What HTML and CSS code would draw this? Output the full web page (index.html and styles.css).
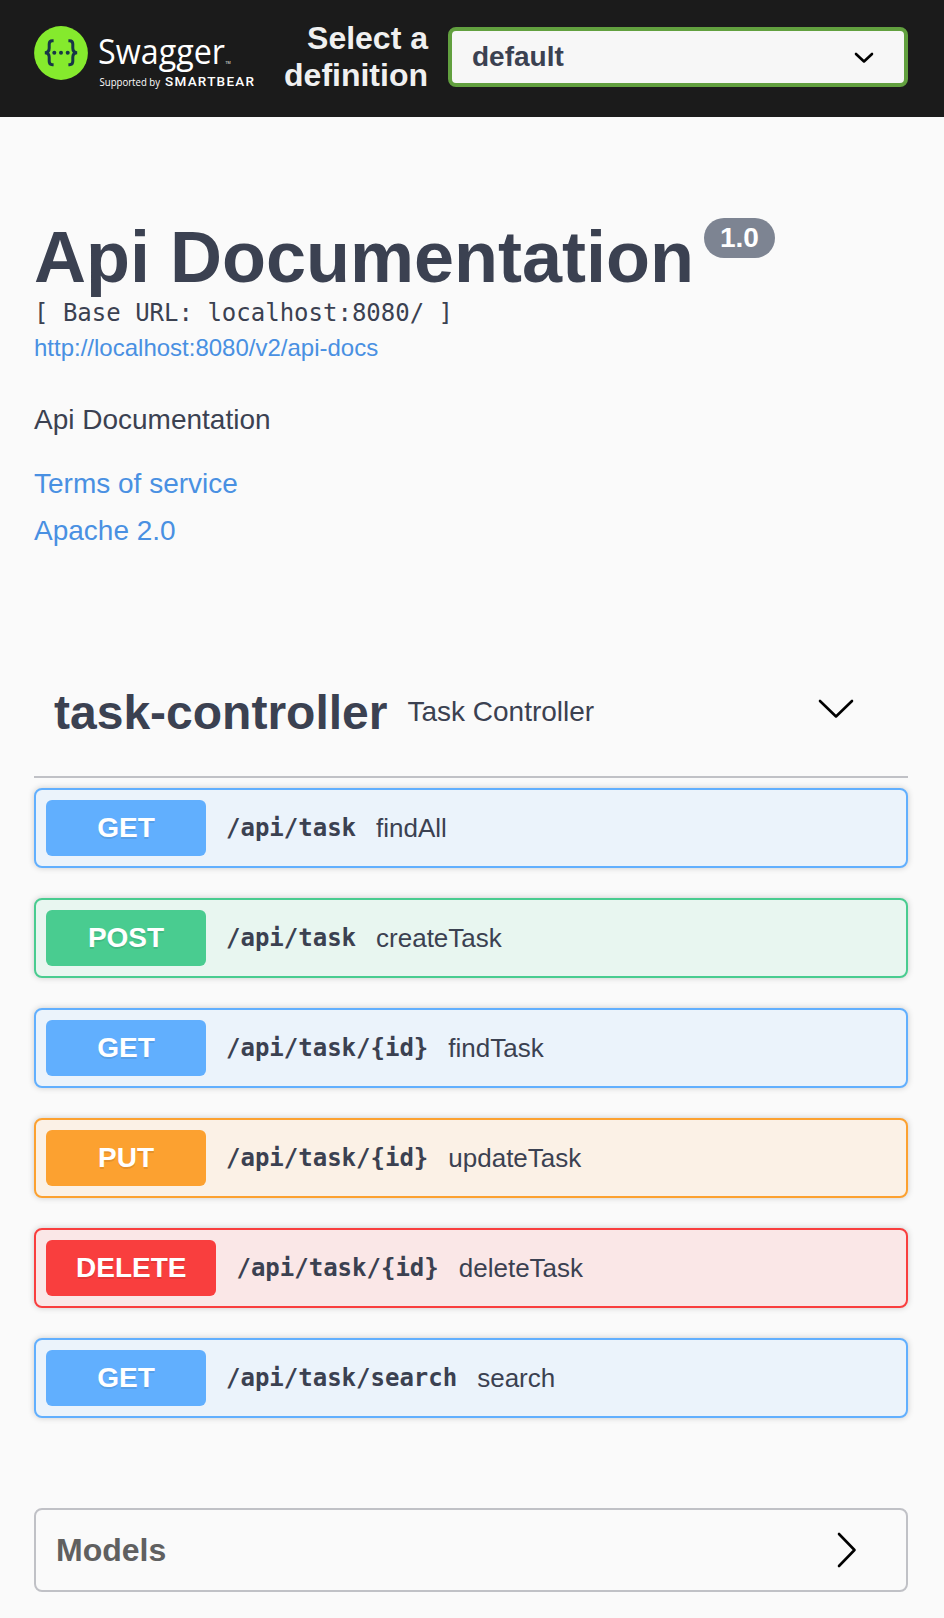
FILE: index.html
```html
<!DOCTYPE html>
<html lang="en">
<head>
<meta charset="utf-8">
<title>Swagger UI</title>
<link rel="stylesheet" href="styles.css">
</head>
<body>
<header class="topbar">
  <svg class="logo" width="222" height="70" viewBox="0 0 222 70" role="img" aria-label="Swagger">
    <circle cx="27" cy="27" r="26.9" fill="#85ea2d"/>
    <g fill="none" stroke="#173647" stroke-width="3">
      <path d="M19.600 14.700h-1.200q-3.200 0-3.200 3.400v4q0 4.600-4.400 4.600q4.400 0 4.400 4.600v4q0 3.400 3.200 3.400h1.200"/>
      <path d="M34.400 14.700h1.200q3.200 0 3.200 3.400v4q0 4.600 4.400 4.600q-4.400 0-4.400 4.600v4q0 3.400-3.200 3.400h-1.200"/>
    </g>
    <g fill="#173647"><circle cx="20.300" cy="26.700" r="2"/><circle cx="27" cy="26.700" r="2"/><circle cx="33.700" cy="26.700" r="2"/></g>
    <text class="logo-name" x="64" y="37.500" textLength="127" lengthAdjust="spacingAndGlyphs">Swagger</text>
    <text class="logo-tm" x="191.500" y="37.500">TM</text>
    <text class="logo-by" x="65.500" y="59.500" textLength="60.500" lengthAdjust="spacingAndGlyphs">Supported by</text>
    <text class="logo-owner" x="131" y="59.500" textLength="89">SMARTBEAR</text>
  </svg>
  <label class="select-label" for="definition">Select a<br>definition</label>
  <button class="select" id="definition" type="button">default
    <svg width="20" height="12" viewBox="0 0 20 12"><path d="M2 2l8 7.500l8-7.500" fill="none" stroke="#000" stroke-width="2.600" stroke-linecap="round" stroke-linejoin="round"/></svg>
  </button>
</header>
<main class="page">
  <section class="info">
    <div class="title-row"><h1 class="title">Api Documentation</h1><span class="version">1.0</span></div>
    <div class="base-url">[ Base URL: localhost:8080/ ]</div>
    <a class="docs-link">http://localhost:8080/v2/api-docs</a>
    <p class="description">Api Documentation</p>
    <a class="terms">Terms of service</a>
    <a class="license">Apache 2.0</a>
  </section>
  <section>
    <div class="tag">
      <h2 class="tag-name">task-controller</h2>
      <span class="tag-text">Task Controller</span>
      <svg class="tag-arrow" width="36" height="20" viewBox="0 0 36 20"><path d="M2 2l16 15.500l16-15.500" fill="none" stroke="#000" stroke-width="2.600" stroke-linecap="round" stroke-linejoin="round"/></svg>
    </div>
    <div class="operations">
      <div class="op get"><span class="method">GET</span><span class="path">/api/task</span><span class="summary">findAll</span></div>
      <div class="op post"><span class="method">POST</span><span class="path">/api/task</span><span class="summary">createTask</span></div>
      <div class="op get"><span class="method">GET</span><span class="path">/api/task/{id}</span><span class="summary">findTask</span></div>
      <div class="op put"><span class="method">PUT</span><span class="path">/api/task/{id}</span><span class="summary">updateTask</span></div>
      <div class="op delete"><span class="method">DELETE</span><span class="path">/api/task/{id}</span><span class="summary">deleteTask</span></div>
      <div class="op get"><span class="method">GET</span><span class="path">/api/task/search</span><span class="summary">search</span></div>
    </div>
  </section>
  <section class="models">
    <h3 class="models-title">Models</h3>
    <svg width="20" height="36" viewBox="0 0 20 36"><path d="M2 2l15.500 16l-15.500 16" fill="none" stroke="#000" stroke-width="2.600" stroke-linecap="round" stroke-linejoin="round"/></svg>
  </section>
</main>
</body>
</html>
```
FILE: styles.css
```css
* { box-sizing: border-box; }
body { margin: 0; background: #fafafa; color: #3b4151; font-family: "Liberation Sans", Arial, sans-serif; }
h1, h2, h3, p { margin: 0; }

.topbar { height: 117px; padding: 0 36px 0 34px; background: #1b1b1b; display: flex; align-items: flex-start; }
.logo { flex: none; margin-top: 26px; }
.logo text { fill: #fff; font-family: "Open Sans", sans-serif; }
.logo .logo-name { font-size: 34px; font-weight: 400; }
.logo .logo-tm { font-size: 3.5px; }
.logo .logo-by { font-size: 10px; }
.logo .logo-owner { font-family: Roboto, sans-serif; font-size: 13.5px; font-weight: 500; }
.select-label { flex: 1; margin: 20px 20px 0 0; color: #f0f0f0; font-size: 32px; font-weight: 700; line-height: 37px; text-align: right; }
.select { width: 460px; height: 60px; margin-top: 27px; padding: 0 30px 0 20px; border: 4px solid #62a03f; border-radius: 8px; background: #f7f7f7; color: #3b4151; font: 700 28px/32px "Liberation Sans", Arial, sans-serif; display: flex; align-items: center; justify-content: space-between; }
.select svg { margin-top: 1px; }

.page { padding: 101px 36px 26px 34px; }
.info { display: flex; flex-direction: column; align-items: flex-start; }
.title-row { display: flex; align-items: flex-start; gap: 10px; }
.title { font-size: 72px; line-height: 78px; white-space: nowrap; }
.version { height: 40px; padding: 0 16px; border-radius: 20px; background: #7d8492; color: #fff; font-size: 28px; font-weight: 700; line-height: 39px; }
.base-url { margin-top: 1px; font: 24px/32px "DejaVu Sans Mono", monospace; }
.docs-link, .terms, .license { color: #4990e2; }
.docs-link { margin-top: 1px; font-size: 24px; line-height: 36px; }
.description { margin-top: 38px; font-size: 28px; line-height: 32px; }
.terms { margin-top: 32px; font-size: 28px; line-height: 32px; }
.license { margin-top: 15px; font-size: 28px; line-height: 32px; }

.tag { height: 112px; margin-top: 119px; padding: 19px 54px 0 20px; border-bottom: 2px solid #c0c1c6; display: flex; align-items: flex-start; }
.tag-name { font-size: 48px; line-height: 56px; }
.tag-text { flex: 1; margin: 11px 0 0 20px; font-size: 28px; line-height: 32px; }
.tag-arrow { margin-top: 14px; }
.operations { padding-top: 10px; display: flex; flex-direction: column; gap: 30px; }
.op { height: 80px; padding: 0 10px; border: 2px solid; border-radius: 8px; box-shadow: 0 0 6px rgba(0, 0, 0, .19); display: flex; align-items: center; gap: 20px; }
.method { min-width: 160px; height: 56px; padding: 0 30px; border-radius: 6px; color: #fff; font-size: 28px; font-weight: 700; line-height: 56px; text-align: center; text-shadow: 0 2px 0 rgba(0, 0, 0, .1); }
.path { font: 700 24px/28px "DejaVu Sans Mono", monospace; }
.summary { font-size: 26px; line-height: 30px; }
.get { border-color: #61affe; background: #ebf3fb; }
.get .method { background: #61affe; }
.post { border-color: #49cc90; background: #e8f6f0; }
.post .method { background: #49cc90; }
.put { border-color: #fca130; background: #fbf1e6; }
.put .method { background: #fca130; }
.delete { border-color: #f93e3e; background: #fae7e7; }
.delete .method { background: #f93e3e; }

.models { height: 84px; margin-top: 90px; padding: 0 49px 0 20px; border: 2px solid #c0c1c6; border-radius: 8px; display: flex; align-items: center; justify-content: space-between; }
.models-title { color: #606060; font-size: 32px; line-height: 36px; }
```
